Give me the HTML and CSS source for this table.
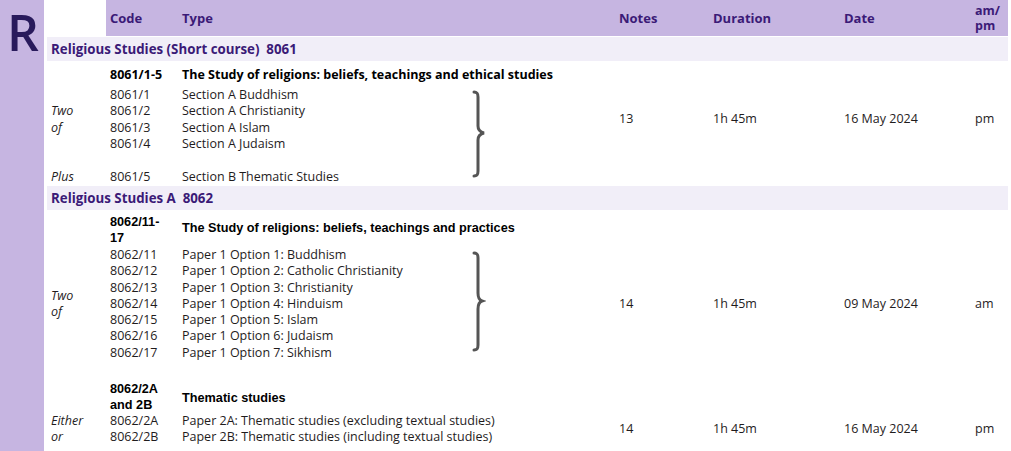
FILE: index.html
```html
<!DOCTYPE html>
<html lang="en">
<head>
<meta charset="utf-8">
<title>Religious Studies timetable</title>
<link rel="stylesheet" href="styles.css">
</head>
<body>
<div class="page">
  <aside class="strip"><span class="letter">R</span></aside>
  <main class="table">
    <div class="head cols">
      <div class="blank"></div>
      <div class="hcell">Code</div>
      <div class="hcell">Type</div>
      <div class="hcell">Notes</div>
      <div class="hcell">Duration</div>
      <div class="hcell">Date</div>
      <div class="hcell">am/<br>pm</div>
    </div>

    <div class="section first">Religious Studies (Short course)&nbsp; 8061</div>

    <div class="group cols g1">
      <div class="c-code r1 title os">8061/1-5</div>
      <div class="c-type r1 title os">The Study of religions: beliefs, teachings and ethical studies</div>

      <div class="c-label r2 label">Two<br>of</div>
      <div class="c-code r2 lines">8061/1<br>8061/2<br>8061/3<br>8061/4</div>
      <div class="c-type r2 lines">Section A Buddhism<br>Section A Christianity<br>Section A Islam<br>Section A Judaism</div>
      <svg class="brace b1" viewBox="0 0 16 88" width="16" height="88" aria-hidden="true">
        <path d="M2 2 C5 2 6 3 6 7 L6 36 C6 40 8 42 12 43 C8 44 6 46 6 50 L6 81 C6 85 5 86 2 86"/>
      </svg>
      <div class="c-notes r2 val">13</div>
      <div class="c-dur r2 val">1h 45m</div>
      <div class="c-date r2 val">16 May 2024</div>
      <div class="c-ampm r2 val">pm</div>

      <div class="c-label r4 label">Plus</div>
      <div class="c-code r4 lines">8061/5</div>
      <div class="c-type r4 lines">Section B Thematic Studies</div>
    </div>

    <div class="section">Religious Studies A&nbsp; 8062</div>

    <div class="group cols g2">
      <div class="c-code r1 title ar two">8062/11-<br>17</div>
      <div class="c-type r1 title ar mid">The Study of religions: beliefs, teachings and practices</div>

      <div class="c-label r2 label">Two<br>of</div>
      <div class="c-code r2 lines">8062/11<br>8062/12<br>8062/13<br>8062/14<br>8062/15<br>8062/16<br>8062/17</div>
      <div class="c-type r2 lines">Paper 1 Option 1: Buddhism<br>Paper 1 Option 2: Catholic Christianity<br>Paper 1 Option 3: Christianity<br>Paper 1 Option 4: Hinduism<br>Paper 1 Option 5: Islam<br>Paper 1 Option 6: Judaism<br>Paper 1 Option 7: Sikhism</div>
      <svg class="brace b2" viewBox="0 0 14 101" width="14" height="101" aria-hidden="true">
        <path d="M2 2 C5 2 6 3 6 7 L6 42 C6 46 7 49 10 50 C7 51 6 54 6 58 L6 94 C6 98 5 99 2 99"/>
      </svg>
      <div class="c-notes r2 val">14</div>
      <div class="c-dur r2 val">1h 45m</div>
      <div class="c-date r2 val">09 May 2024</div>
      <div class="c-ampm r2 val">am</div>

      <div class="c-code r4 title ar two2">8062/2A<br>and 2B</div>
      <div class="c-type r4 title ar mid">Thematic studies</div>

      <div class="c-label r5 label">Either<br>or</div>
      <div class="c-code r5 lines">8062/2A<br>8062/2B</div>
      <div class="c-type r5 lines">Paper 2A: Thematic studies (excluding textual studies)<br>Paper 2B: Thematic studies (including textual studies)</div>
      <div class="c-notes r5 val">14</div>
      <div class="c-dur r5 val">1h 45m</div>
      <div class="c-date r5 val">16 May 2024</div>
      <div class="c-ampm r5 val">pm</div>
    </div>
  </main>
</div>
</body>
</html>
```

FILE: styles.css
```css
* { box-sizing: border-box; }

html, body {
  margin: 0;
  padding: 0;
  background: #ffffff;
}

body {
  font-family: "Open Sans", "Liberation Sans", sans-serif;
  font-size: 12.5px;
  color: #1f1c1d;
  overflow: hidden;
}

.page {
  display: flex;
  gap: 3px;
  width: 1011px;
  height: 451px;
}

.strip {
  flex: 0 0 44px;
  background: #c6b5e1;
  display: flex;
  justify-content: center;
}

.letter {
  font-family: "Open Sans", sans-serif;
  font-size: 50px;
  font-weight: 600;
  line-height: 1;
  color: #291a5c;
  padding-top: 7px;
  padding-left: 2px;
}

.table {
  width: 961px;
  display: flex;
  flex-direction: column;
}

.cols {
  display: grid;
  grid-template-columns: 59px 72px 437px 94px 131px 131px 37px;
}

/* header */
.head {
  height: 36px;
}
.hcell {
  background: #c6b5e1;
  color: #3b1a77;
  font-weight: 700;
  font-size: 13px;
  line-height: 15px;
  padding-left: 4px;
  display: flex;
  align-items: center;
}
.hcell:last-child {
  font-size: 12.5px;
  line-height: 15.5px;
}

/* section bars */
.section {
  height: 24px;
  background: #f1eef8;
  color: #3b1a77;
  font-weight: 700;
  font-size: 13.3px;
  line-height: 24px;
  padding-left: 4px;
}
.section.first {
  margin-top: 1px;
}

/* groups */
.group {
  line-height: 16.3px;
}
.g1 {
  grid-template-rows: 26px auto 16.5px auto;
  padding-bottom: 1px;
}
.g2 {
  grid-template-rows: 37px auto 21px 31px auto;
}

.r1 { grid-row: 1; }
.r2 { grid-row: 2; }
.r4 { grid-row: 4; }
.r5 { grid-row: 5; }

.c-label { grid-column: 1; }
.c-code  { grid-column: 2; }
.c-type  { grid-column: 3; }
.c-notes { grid-column: 4; }
.c-dur   { grid-column: 5; }
.c-date  { grid-column: 6; }
.c-ampm  { grid-column: 7; }

.c-label, .c-code, .c-type, .c-notes, .c-dur, .c-date, .c-ampm {
  padding-left: 4px;
  white-space: nowrap;
}

.title {
  font-weight: 700;
  color: #000;
}
.title.os {
  align-self: center;
  line-height: 16px;
  padding-top: 1px;
}
.title.ar {
  font-family: "Liberation Sans", Arial, sans-serif;
  font-size: 12.7px;
}
.title.two {
  line-height: 16px;
  padding-top: 4px;
}
.title.two2 {
  line-height: 15.5px;
}
.title.mid {
  align-self: center;
  line-height: 16px;
}

.label {
  font-style: italic;
  align-self: center;
}

.val {
  align-self: center;
}

.brace {
  grid-column: 3;
  fill: none;
  stroke: #555555;
  stroke-width: 3;
  stroke-linecap: round;
  justify-self: start;
  align-self: start;
  margin-left: 294px;
}
.b1 {
  grid-row: 2 / 5;
  margin-top: 3px;
}
.b2 {
  grid-row: 2;
  margin-top: 4px;
}
```
